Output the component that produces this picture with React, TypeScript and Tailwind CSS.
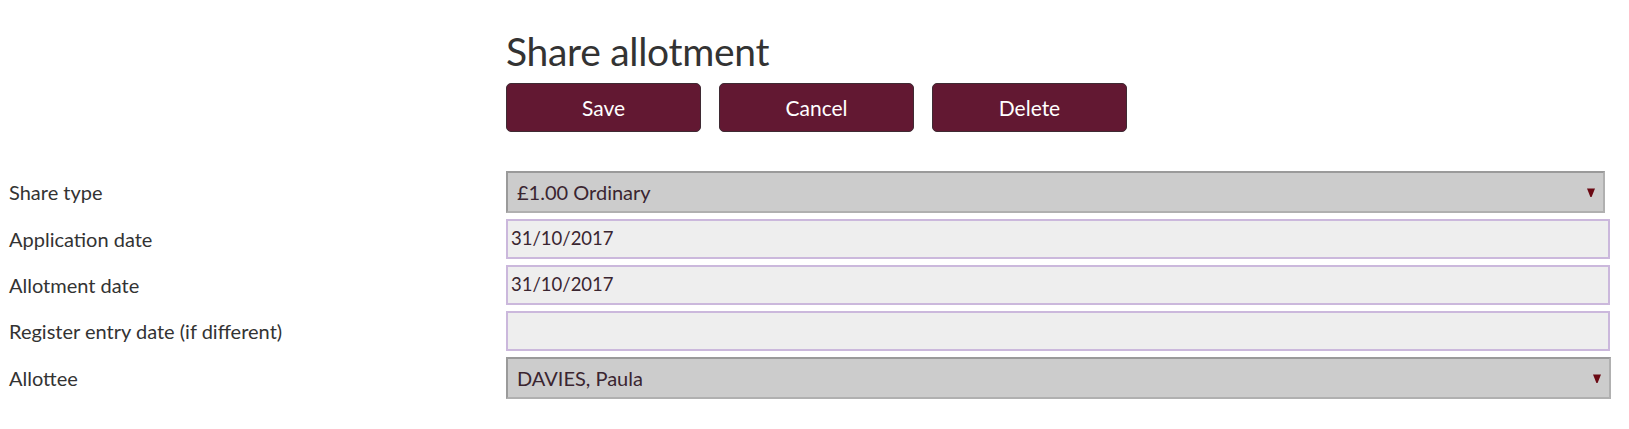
import React from 'react';

const rows = [
  { label: 'Share type', kind: 'select', value: '£1.00 Ordinary', right: 'mr-[24px]' },
  { label: 'Application date', kind: 'input', value: '31/10/2017' },
  { label: 'Allotment date', kind: 'input', value: '31/10/2017' },
  { label: 'Register entry date (if different)', kind: 'input', value: '' },
  { label: 'Allottee', kind: 'select', value: 'DAVIES, Paula', right: 'mr-[18px]' },
];

export default function App() {
  return (
    <div className="w-[1629px] h-[429px] bg-white text-[#333] font-['Lato','Liberation_Sans',sans-serif]">
      {/* Header */}
      <div className="pl-[506px] pt-[27px]">
        <h1 className="text-[39px] leading-[48px] text-[#333] tracking-[-0.3px]">Share allotment</h1>
        <div className="flex gap-[18px] mt-[8px]">
          {['Save', 'Cancel', 'Delete'].map((b) => (
            <button
              key={b}
              className="w-[195px] h-[49px] rounded-[5px] bg-[#621832] border border-[#3f2a33] text-white text-[21px]"
            >
              {b}
            </button>
          ))}
        </div>
      </div>

      {/* Form */}
      <div className="mt-[39px] flex flex-col">
        {rows.map((r, i) => (
          <div key={i} className={`flex items-center ${i > 0 ? 'mt-[6px]' : ''}`}>
            <div className="w-[506px] pl-[9px] text-[20px]">{r.label}</div>
            {r.kind === 'select' ? (
              <div
                className={`flex-1 ${r.right} h-[42px] bg-[#cccccc] border-2 border-[#9a9a9a] border-r-[#b0b0b0] border-b-[#b0b0b0] flex items-center pl-[9px] pr-[8px] text-[20px] text-[#3a2530]`}
              >
                <span className="flex-1">{r.value}</span>
                <svg width="8" height="9" viewBox="0 0 8 9">
                  <path d="M0 0.5 L8 0.5 L4.6 9 L3.4 9 Z" fill="#6b0a14" />
                </svg>
              </div>
            ) : (
              <div className="flex-1 mr-[19px] h-[40px] bg-[#eeeeee] border-2 border-[#cbb8dc] flex items-center pl-[3px] text-[18.5px] text-[#3a2530]">
                {r.value}
              </div>
            )}
          </div>
        ))}
      </div>
    </div>
  );
}
